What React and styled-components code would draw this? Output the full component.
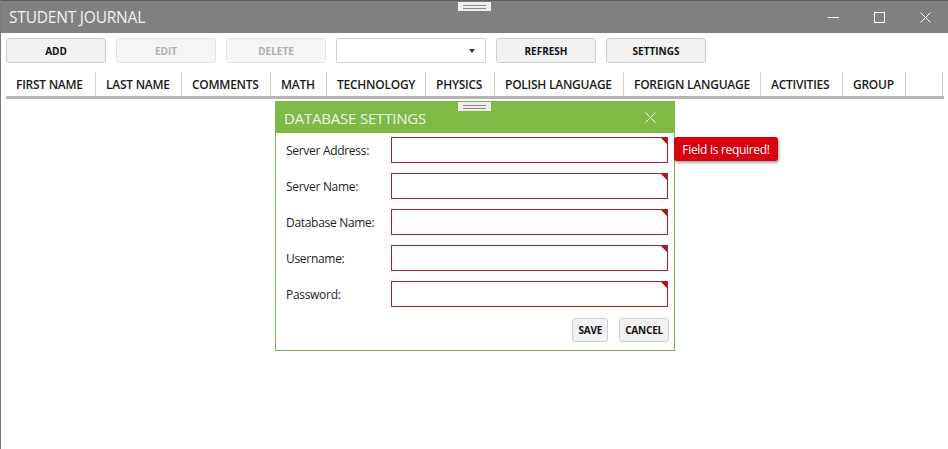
import React from "react";
import styled, { createGlobalStyle } from "styled-components";

const GlobalStyle = createGlobalStyle`
  html, body {
    margin: 0;
    padding: 0;
    background: #ffffff;
  }
  body {
    font-family: "Open Sans", "Noto Sans", sans-serif;
  }
`;

const Window = styled.div`
  position: relative;
  width: 948px;
  height: 449px;
  box-sizing: border-box;
  border-left: 1px solid #7a7a7a;
  background: #ffffff;
  overflow: hidden;
`;

const TitleBar = styled.div`
  height: 33px;
  background: #808080;
  border-top: 1px solid #5e5e5e;
  box-sizing: border-box;
  display: flex;
  align-items: center;
  padding-left: 8px;
`;

const Title = styled.div`
  flex: 1;
  color: #f4f4f4;
  font-size: 15.5px;
  letter-spacing: -0.2px;
  font-weight: 400;
`;

const WinControls = styled.div`
  display: flex;
  height: 100%;
`;

const WinButton = styled.div`
  width: 46px;
  height: 100%;
  display: flex;
  align-items: center;
  justify-content: center;
`;

const Gripper = styled.div`
  position: absolute;
  top: ${(p) => p.$top}px;
  left: 457px;
  width: 33px;
  height: 9px;
  background: #eeeef0;
  display: flex;
  flex-direction: column;
  justify-content: center;
  align-items: center;
  gap: 2px;

  &::before,
  &::after {
    content: "";
    width: 23px;
    height: 1px;
    background: #8a8a8a;
  }
`;

const Toolbar = styled.div`
  display: flex;
  gap: 10px;
  padding: 5px 5px 0 5px;
`;

const ToolButton = styled.div`
  width: 100px;
  height: 25px;
  box-sizing: border-box;
  border: 1px solid ${(p) => (p.$disabled ? "#e4e4e4" : "#cfcfcf")};
  border-radius: 3px;
  background: ${(p) => (p.$disabled ? "#f5f5f5" : "#f2f2f2")};
  color: ${(p) => (p.$disabled ? "#b0b0b0" : "#111")};
  font-size: 10px;
  font-weight: 700;
  display: flex;
  align-items: center;
  justify-content: center;
`;

const Combo = styled.div`
  width: 150px;
  height: 25px;
  box-sizing: border-box;
  border: 1px solid #cfcfcf;
  border-radius: 2px;
  background: #fff;
  display: flex;
  align-items: center;
  justify-content: flex-end;
  padding-right: 10px;

  &::after {
    content: "";
    border-left: 3.5px solid transparent;
    border-right: 3.5px solid transparent;
    border-top: 4px solid #333;
  }
`;

const HeaderRow = styled.div`
  display: flex;
  margin: 8px 4px 0 5px;
  height: 25px;
  border-bottom: 3px solid #b5b5b5;
`;

const HeaderCell = styled.div`
  width: ${(p) => p.$w}px;
  box-sizing: border-box;
  border-right: 1px solid #d2d2d2;
  margin-top: 1px;
  padding: 1px 0 0 10px;
  font-size: 12px;
  font-weight: 600;
  color: #1a1a1a;
  display: flex;
  align-items: center;
  white-space: nowrap;
  letter-spacing: -0.25px;
`;

const Dialog = styled.div`
  position: absolute;
  left: 274px;
  top: 101px;
  width: 400px;
  height: 250px;
  box-sizing: border-box;
  border: 1px solid #7db54a;
  background: #fff;
  display: flex;
  flex-direction: column;
`;

const DialogHeader = styled.div`
  height: 31px;
  background: #80b946;
  display: flex;
  align-items: center;
  padding: 0 18px 0 8px;
  flex-shrink: 0;
`;

const DialogTitle = styled.div`
  flex: 1;
  color: #eef6e6;
  font-size: 15px;
  letter-spacing: -0.2px;
`;

const Form = styled.div`
  display: flex;
  flex-direction: column;
  gap: 10px;
  padding: 4px 6px 0 10px;
`;

const Row = styled.div`
  display: flex;
  align-items: center;
  height: 26px;
`;

const Label = styled.div`
  width: 105px;
  font-size: 12px;
  color: #1e1e1e;
  letter-spacing: -0.3px;
`;

const Field = styled.div`
  position: relative;
  width: 277px;
  height: 26px;
  box-sizing: border-box;
  border: 1px solid #a8202a;
  background: #fff;

  &::after {
    content: "";
    position: absolute;
    top: 0;
    right: 0;
    border-left: 6px solid transparent;
    border-top: 6px solid #b0121c;
  }
`;

const Tooltip = styled.div`
  position: absolute;
  left: 673px;
  top: 137px;
  width: 104px;
  height: 24px;
  box-sizing: border-box;
  background: #d8000f;
  border-radius: 3px;
  box-shadow: 1px 2px 3px rgba(0, 0, 0, 0.35);
  color: #fff;
  font-size: 12px;
  letter-spacing: -0.3px;
  display: flex;
  align-items: center;
  justify-content: center;
`;

const Actions = styled.div`
  display: flex;
  justify-content: flex-end;
  gap: 11px;
  padding: 11px 5px 0 0;
`;

const SmallButton = styled.div`
  height: 24px;
  padding: 0 5px;
  box-sizing: border-box;
  border: 1px solid #cfcfcf;
  border-radius: 3px;
  background: #f2f2f2;
  color: #111;
  font-size: 10px;
  font-weight: 700;
  letter-spacing: -0.2px;
  display: flex;
  align-items: center;
`;

const columns = [
  ["FIRST NAME", 90],
  ["LAST NAME", 86],
  ["COMMENTS", 89],
  ["MATH", 56],
  ["TECHNOLOGY", 99],
  ["PHYSICS", 69],
  ["POLISH LANGUAGE", 129],
  ["FOREIGN LANGUAGE", 137],
  ["ACTIVITIES", 82],
  ["GROUP", 63],
  ["", 37],
];

const fields = [
  "Server Address:",
  "Server Name:",
  "Database Name:",
  "Username:",
  "Password:",
];

const CloseIcon = ({ size = 11, color = "#fff" }) => (
  <svg width={size} height={size} viewBox="0 0 11 11">
    <path d="M0.5 0.5 L10.5 10.5 M10.5 0.5 L0.5 10.5" stroke={color} strokeWidth="1" />
  </svg>
);

const App = () => {
  return (
    <Window>
      <GlobalStyle />
      <TitleBar>
        <Title>STUDENT JOURNAL</Title>
        <WinControls>
          <WinButton>
            <svg width="11" height="11" viewBox="0 0 11 11">
              <path d="M0 5.5 H11" stroke="#fff" strokeWidth="1" />
            </svg>
          </WinButton>
          <WinButton>
            <svg width="11" height="11" viewBox="0 0 11 11">
              <rect x="0.5" y="0.5" width="10" height="10" fill="none" stroke="#fff" strokeWidth="1" />
            </svg>
          </WinButton>
          <WinButton>
            <CloseIcon />
          </WinButton>
        </WinControls>
      </TitleBar>
      <Gripper $top={2} />

      <Toolbar>
        <ToolButton>ADD</ToolButton>
        <ToolButton $disabled>EDIT</ToolButton>
        <ToolButton $disabled>DELETE</ToolButton>
        <Combo />
        <ToolButton>REFRESH</ToolButton>
        <ToolButton>SETTINGS</ToolButton>
      </Toolbar>

      <HeaderRow>
        {columns.map(([name, w], i) => (
          <HeaderCell key={i} $w={w}>
            {name}
          </HeaderCell>
        ))}
      </HeaderRow>

      <Dialog>
        <DialogHeader>
          <DialogTitle>DATABASE SETTINGS</DialogTitle>
          <CloseIcon size={11} color="#f4f9ee" />
        </DialogHeader>
        <Form>
          {fields.map((f) => (
            <Row key={f}>
              <Label>{f}</Label>
              <Field />
            </Row>
          ))}
        </Form>
        <Actions>
          <SmallButton>SAVE</SmallButton>
          <SmallButton>CANCEL</SmallButton>
        </Actions>
      </Dialog>
      <Gripper $top={102} />
      <Tooltip>Field is required!</Tooltip>
    </Window>
  );
};

export default App;
